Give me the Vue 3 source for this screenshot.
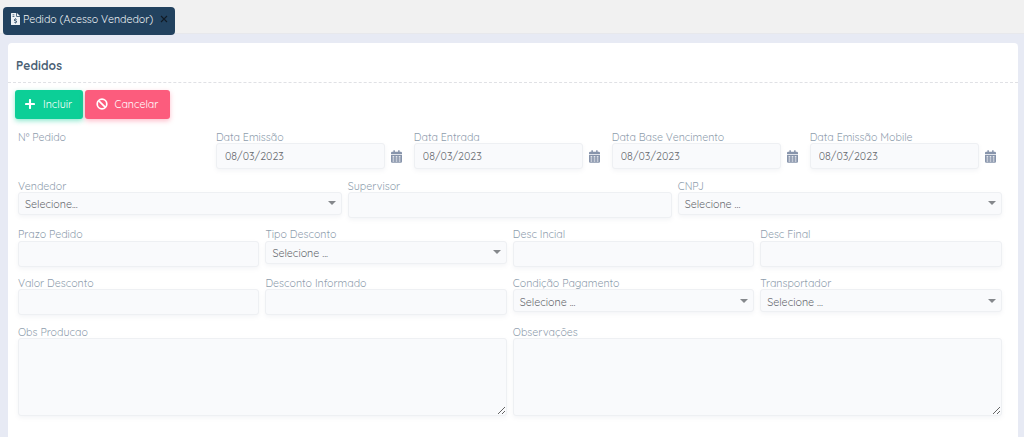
<script setup>
import { reactive } from 'vue'

const form = reactive({
    emissao: '08/03/2023',
    entrada: '08/03/2023',
    vencimento: '08/03/2023',
    mobile: '08/03/2023',
})

const rows = [
    [
        { label: 'Nº Pedido', type: 'empty' },
        { label: 'Data Emissão', type: 'date', model: 'emissao' },
        { label: 'Data Entrada', type: 'date', model: 'entrada' },
        { label: 'Data Base Vencimento', type: 'date', model: 'vencimento' },
        { label: 'Data Emissão Mobile', type: 'date', model: 'mobile' },
    ],
    [
        { label: 'Vendedor', type: 'select', text: 'Selecione...' },
        { label: 'Supervisor', type: 'text' },
        { label: 'CNPJ', type: 'select', text: 'Selecione ...' },
    ],
    [
        { label: 'Prazo Pedido', type: 'text' },
        { label: 'Tipo Desconto', type: 'select', text: 'Selecione ...' },
        { label: 'Desc Incial', type: 'text' },
        { label: 'Desc Final', type: 'text' },
    ],
    [
        { label: 'Valor Desconto', type: 'text' },
        { label: 'Desconto Informado', type: 'text' },
        { label: 'Condição Pagamento', type: 'select', text: 'Selecione ...' },
        { label: 'Transportador', type: 'select', text: 'Selecione ...' },
    ],
    [
        { label: 'Obs Producao', type: 'textarea' },
        { label: 'Observações', type: 'textarea' },
    ],
]
</script>

<template>
    <div class="page">
        <div class="tabs">
            <div class="tab">
                <svg class="tab-icon" viewBox="0 0 384 512">
                    <path
                        fill="currentColor"
                        fill-rule="evenodd"
                        d="M0 24Q0 0 24 0H224V136Q224 160 248 160H384V488Q384 512 360 512H24Q0 512 0 488ZM256 0L384 128H256ZM64 64V96H144V64ZM64 128V160H144V128ZM176 224V249Q128 258 128 302Q128 339 171 352L211 364Q224 368 224 379Q224 392 209 392H178Q166 392 154 384L131 408Q149 423 176 424V448H208V424Q256 417 256 374Q256 337 213 324L173 312Q160 307 160 297Q160 281 176 281H206Q219 281 230 289L253 266Q234 250 208 249V224Z"
                    />
                </svg>
                <span class="tab-title">Pedido (Acesso Vendedor)</span>
                <svg class="tab-close" viewBox="0 0 8 8">
                    <path d="M1 1L7 7M7 1L1 7" stroke="currentColor" stroke-width="1.1" />
                </svg>
            </div>
        </div>

        <div class="card">
            <div class="card-header">
                <h3>Pedidos</h3>
            </div>
            <div class="buttons">
                <button class="btn include">
                    <svg viewBox="0 0 10 10">
                        <path d="M5 1V9M1 5H9" stroke="currentColor" stroke-width="2.1" stroke-linecap="round" />
                    </svg>
                    <span>Incluir</span>
                </button>
                <button class="btn cancel">
                    <svg viewBox="0 0 12 12">
                        <circle cx="6" cy="6" r="4.8" fill="none" stroke="currentColor" stroke-width="1.7" />
                        <path d="M2.6 2.6L9.4 9.4" stroke="currentColor" stroke-width="1.7" />
                    </svg>
                    <span>Cancelar</span>
                </button>
            </div>

            <div class="form">
                <div v-for="(row, i) in rows" :key="i" class="row">
                    <div v-for="field in row" :key="field.label" class="field">
                        <label>{{ field.label }}</label>
                        <div v-if="field.type === 'date'" class="date">
                            <input v-model="form[field.model]" class="control" type="text" />
                            <svg class="calendar" viewBox="0 0 448 512">
                                <path
                                    fill="currentColor"
                                    fill-rule="evenodd"
                                    d="M0 192H448V464Q448 512 400 512H48Q0 512 0 464ZM64 244V300H132V244ZM190 244V300H258V244ZM316 244V300H384V244ZM64 334V382H132V334ZM190 334V382H258V334ZM316 334V382H384V334ZM64 416V464H132V416ZM190 416V464H258V416ZM316 416V464H384V416ZM0 160V112Q0 64 48 64H96V12Q96 0 108 0H148Q160 0 160 12V64H288V12Q288 0 300 0H340Q352 0 352 12V64H400Q448 64 448 112V160Z"
                                />
                            </svg>
                        </div>
                        <input v-else-if="field.type === 'text'" class="control" type="text" />
                        <div v-else-if="field.type === 'select'" class="control select">
                            <span>{{ field.text }}</span>
                            <i class="arrow"></i>
                        </div>
                        <textarea v-else-if="field.type === 'textarea'" class="control"></textarea>
                    </div>
                </div>
            </div>
        </div>
    </div>
</template>

<style>
body {
    margin: 0;
    overflow: hidden;
}
</style>

<style scoped>
.page {
    height: 437px;
    overflow: hidden;
    box-sizing: border-box;
    background: #e7eaf4;
    font-family: Quicksand, Lato, sans-serif;
    font-size: 10.6px;
}
.page * {
    box-sizing: border-box;
}
.tabs {
    height: 34px;
    padding: 7px 3px 0;
    background: #f1f1f1;
    border-bottom: 1px solid #e7e8ec;
}
.tab {
    display: flex;
    align-items: center;
    width: 172px;
    height: 28px;
    padding: 0 7px 4px 8px;
    border-radius: 4px;
    background: #22425f;
    color: #eef2f5;
    white-space: nowrap;
}
.tab-icon {
    flex-shrink: 0;
    width: 9px;
    height: 12px;
    margin-right: 3px;
}
.tab-title {
    font-size: 10.6px;
}
.tab-close {
    flex-shrink: 0;
    width: 8px;
    height: 8px;
    margin-left: auto;
    color: #111b25;
}
.card {
    width: 1010px;
    height: 420px;
    margin: 9px 0 0 8px;
    border-radius: 4px;
    background: #fff;
}
.card-header {
    display: flex;
    align-items: center;
    height: 40px;
    padding: 5px 8px 0;
    border-bottom: 1px dashed #e0e1e5;
}
h3 {
    margin: 0;
    font-size: 12px;
    font-weight: 700;
    letter-spacing: 0.1px;
    color: #4a5f74;
}
.buttons {
    display: flex;
    gap: 2.5px;
    padding: 6.5px 6.5px 0;
    height: 47px;
}
.btn {
    display: flex;
    align-items: center;
    height: 29px;
    padding: 0 10.5px;
    border: none;
    border-radius: 3px;
    color: #fff;
    font-family: inherit;
    font-size: 10.6px;
}
.include {
    width: 68px;
    background: #0ccf97;
    box-shadow: 0 2px 5px rgba(12, 207, 151, 0.45);
}
.cancel {
    width: 85px;
    background: #fc5c7d;
    box-shadow: 0 2px 5px rgba(252, 92, 125, 0.4);
}
.btn svg {
    flex-shrink: 0;
    width: 10px;
    height: 10px;
    margin-right: 8px;
}
.cancel svg {
    width: 12px;
    height: 12px;
    margin-right: 7px;
}
.form {
    width: 989.6px;
    margin-left: 7px;
}
.row {
    display: flex;
    height: 48.7px;
}
.field {
    flex: 1;
    min-width: 0;
    padding: 0 3px;
}
label {
    display: block;
    height: 13.3px;
    line-height: 14px;
    white-space: nowrap;
    color: #8e9dad;
}
.control {
    display: block;
    width: 100%;
    height: 26px;
    padding: 0 8px;
    border: 1px solid #eef0f3;
    border-radius: 3px;
    outline: none;
    background: #f9fafc;
    box-shadow: 0 2px 4px rgba(120, 130, 150, 0.08);
    color: #66696e;
    font-family: inherit;
    font-size: 10.7px;
}
.date {
    display: flex;
    align-items: center;
}
.date .control {
    width: 169px;
}
.calendar {
    width: 11px;
    height: 13px;
    margin-left: 6px;
    color: #8794ab;
}
.select {
    display: flex;
    align-items: center;
    justify-content: space-between;
    height: 23px;
    padding: 2px 5px 0 6px;
}
.arrow {
    border: 3.5px solid transparent;
    border-top: 4.5px solid #85888c;
    border-bottom: 0;
    border-left-width: 4px;
    border-right-width: 4px;
    margin-bottom: 2px;
}
textarea.control {
    height: 78px;
    resize: both;
}
</style>
